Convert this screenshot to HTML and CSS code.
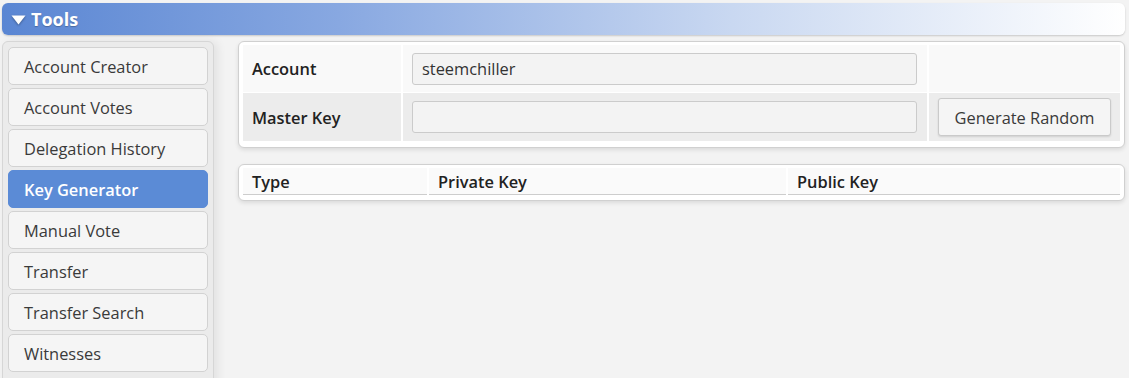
FILE: index.html
```html
<!DOCTYPE html>
<html>
<head>
<meta charset="utf-8">
<link rel="stylesheet" href="styles.css">
</head>
<body>
<div class="header">
  <svg class="tri" width="15" height="10" viewBox="0 0 15 10"><polygon points="0.5,0.5 14.5,0.5 7.5,9.5" fill="#fff"/></svg>
  <span class="title">Tools</span>
</div>
<div class="layout">
  <div class="sidebar">
    <div class="item">Account Creator</div>
    <div class="item">Account Votes</div>
    <div class="item">Delegation History</div>
    <div class="item active">Key Generator</div>
    <div class="item">Manual Vote</div>
    <div class="item">Transfer</div>
    <div class="item">Transfer Search</div>
    <div class="item">Witnesses</div>
  </div>
  <div class="main">
    <div class="panel">
      <table class="form">
        <tr class="r1">
          <td class="lbl">Account</td>
          <td class="inp"><div class="input">steemchiller</div></td>
          <td class="btncell"></td>
        </tr>
        <tr class="r2">
          <td class="lbl">Master Key</td>
          <td class="inp"><div class="input"></div></td>
          <td class="btncell"><button class="btn">Generate Random</button></td>
        </tr>
      </table>
    </div>
    <div class="panel panel2">
      <table class="keys">
        <tr>
          <th class="c1">Type</th>
          <th class="c2">Private Key</th>
          <th class="c3">Public Key</th>
        </tr>
      </table>
    </div>
  </div>
</div>
</body>
</html>
```
FILE: styles.css
```css
html, body {
  margin: 0;
  padding: 0;
}
body {
  background: #f3f3f3;
  font-family: "Open Sans", "Noto Sans", sans-serif;
  font-size: 16.4px;
  color: #333;
  padding: 3px 4px 0 2px;
  height: 378px;
  box-sizing: border-box;
  overflow: hidden;
}
.header {
  height: 32px;
  border-radius: 6px;
  background: linear-gradient(to right, #5a86d3 0%, #88a8e1 30%, #c9d8f1 65%, #ffffff 100%);
  box-shadow: 0 1px 2px rgba(0,0,0,0.18);
  display: flex;
  align-items: center;
  padding-left: 9px;
  box-sizing: border-box;
}
.tri {
  filter: drop-shadow(0 1px 1px rgba(0,0,0,0.35));
  margin-right: 5px;
  margin-top: 2px;
}
.title {
  color: #fff;
  font-weight: 700;
  font-size: 18px;
  text-shadow: 0 1px 1px rgba(0,0,0,0.25);
}
.layout {
  display: flex;
  align-items: flex-start;
  margin-top: 6px;
}
.sidebar {
  width: 212px;
  box-sizing: border-box;
  border: 1px solid #d6d6d6;
  border-radius: 6px;
  background: #ebebeb;
  padding: 5px 5px 20px 5px;
  box-shadow: 4px 0 10px rgba(0,0,0,0.07);
  display: flex;
  flex-direction: column;
  gap: 3px;
}
.item {
  height: 38px;
  box-sizing: border-box;
  border: 1px solid #d2d2d2;
  border-radius: 5px;
  background: #f5f5f5;
  padding-left: 15px;
  display: flex;
  align-items: center;
  color: #3a3a3a;
}
.item.active {
  background: #5b8bd6;
  border-color: #5b8bd6;
  color: #fff;
  font-weight: 600;
}
.main {
  flex: 1;
  margin-left: 24px;
}
.panel {
  background: #fff;
  border: 1px solid #d0d0d0;
  border-radius: 6px;
  box-shadow: 0 2px 4px rgba(0,0,0,0.1);
  padding: 2px 4px 5px 4px;
}
.panel2 {
  margin-top: 16px;
  padding-top: 3px;
  padding-bottom: 5px;
}
table {
  border-collapse: separate;
  width: 100%;
}
.form {
  border-spacing: 2px 1px;
  margin: 0 -2px;
  width: calc(100% + 4px);
}
.form td {
  padding: 0;
}
.r1 td { background: #f9f9f9; height: 47px; }
.r2 td { background: #ececec; height: 48px; }
.lbl {
  width: 149px;
  padding-left: 9px !important;
  font-weight: 600;
  color: #222;
}
.inp {
  padding: 0 10px 0 9px !important;
}
.input {
  height: 32px;
  box-sizing: border-box;
  border: 1px solid #cbcbcb;
  border-radius: 3px;
  background: #f3f3f3;
  padding-left: 9px;
  display: flex;
  align-items: center;
  color: #333;
}
.btncell {
  width: 182px;
  padding-left: 9px !important;
}
.btn {
  font-family: "Open Sans", "Noto Sans", sans-serif;
  font-size: 16.4px;
  color: #3a3a3a;
  height: 38px;
  width: 173px;
  background: #f5f5f5;
  border: 1px solid #cacaca;
  border-radius: 3px;
  box-shadow: 0 1px 2px rgba(0,0,0,0.12);
  padding: 0;
}
.keys {
  border-spacing: 2px 0;
  margin: 0 -2px;
  width: calc(100% + 4px);
}
.keys th {
  text-align: left;
  font-weight: 600;
  color: #222;
  background: #fafafa;
  border-bottom: 1px solid #cdcdcd;
  height: 27px;
  padding: 0 0 0 9px;
  box-sizing: border-box;
}
.c1 { width: 184px; }
.c2 { width: 357px; }
```
